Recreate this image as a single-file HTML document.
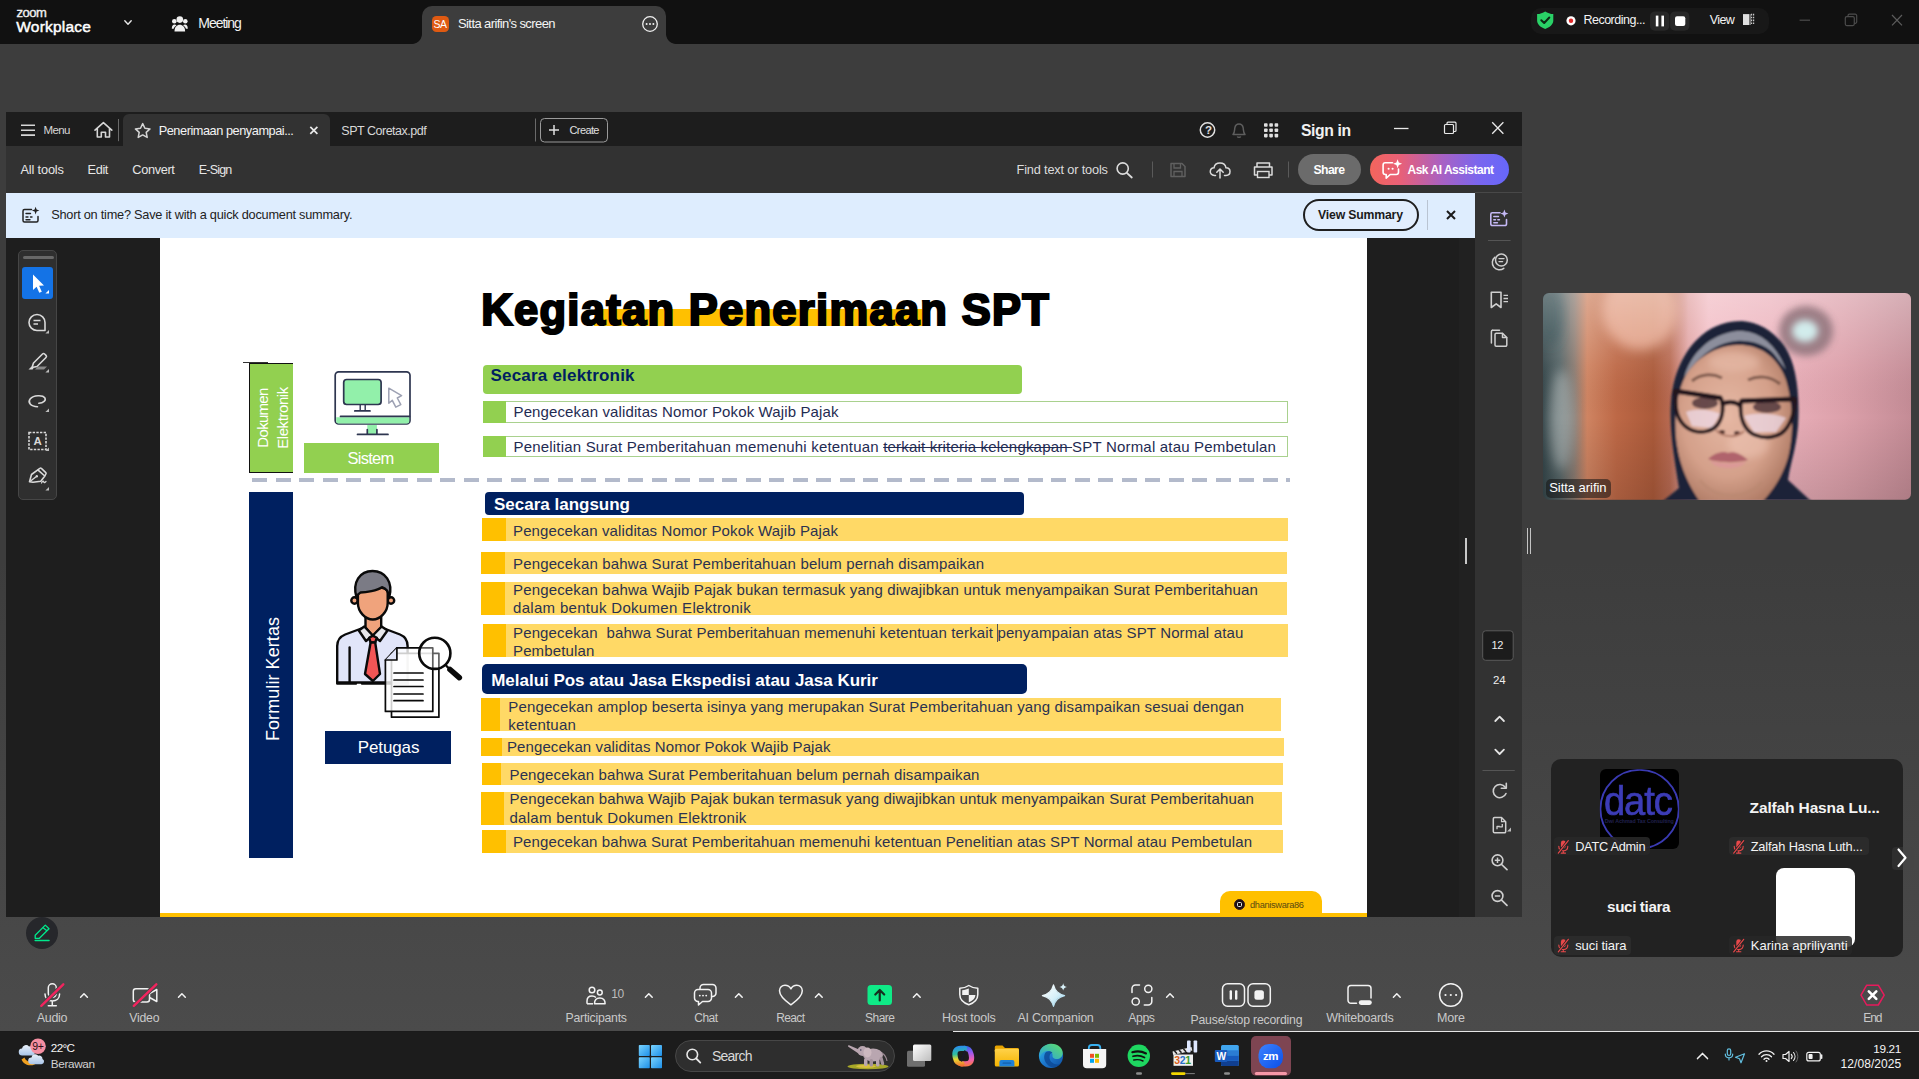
<!DOCTYPE html>
<html lang="id">
<head>
<meta charset="utf-8">
<title>Zoom Workplace</title>
<style>
*{box-sizing:border-box;margin:0;padding:0}
html,body{width:1919px;height:1079px;overflow:hidden}
body{position:relative;font-family:"Liberation Sans",sans-serif;color:#fff;background:linear-gradient(180deg,#3d3d3d 0,#3d3d3d 560px,#4b4b4b 1031px);}
.abs{position:absolute}
.t{position:absolute;white-space:pre;line-height:1}
svg{position:absolute;overflow:visible}

</style>
</head>
<body>
<!-- BG -->
<div class="abs" style="left:0px;top:0px;width:1919px;height:44px;background:#111;"></div>
<div class="abs" style="left:422px;top:6px;width:244px;height:38px;background:#3d3d3d;border-radius:10px 10px 0 0;"></div>
<div class="abs" style="left:6px;top:112px;width:1516px;height:805px;background:#1e1e1e;"></div>
<div class="abs" style="left:6px;top:112px;width:1516px;height:34px;background:#1d1d1d;"></div>
<div class="abs" style="left:123px;top:114px;width:207px;height:32px;background:#323232;border-radius:6px 6px 0 0;"></div>
<div class="abs" style="left:6px;top:146px;width:1516px;height:47px;background:#323232;"></div>
<div class="abs" style="left:6px;top:193px;width:1469px;height:45px;background:#deedfe;"></div>
<div class="abs" style="left:1475px;top:193px;width:47px;height:724px;background:#323232;"></div>
<div class="abs" style="left:0px;top:1032px;width:1919px;height:47px;background:#1c1c1c;"></div>
<!-- SLIDE -->
<div class="abs" style="left:160px;top:238px;width:1207px;height:679px;background:#fff;"></div>
<div class="abs" style="left:594px;top:309px;width:329px;height:17px;background:#ffc000;"></div>
<span class="t" style="left:481.20px;top:289.00px;font-size:43.5px;letter-spacing:1.297px;font-weight:700;color:#000;-webkit-text-stroke:2.200px #000;">Kegiatan Penerimaan SPT</span>
<div class="abs" style="left:243px;top:362px;width:25px;height:1px;background:#333;"></div>
<div class="abs" style="left:249px;top:363px;width:44px;height:109.5px;background:#92d050;border:1px solid #111;border-right:0;"></div>
<span class="t" style="left:262.30px;top:417.50px;font-size:15px;letter-spacing:-0.700px;transform:translate(-50%,-50%) rotate(-90deg);transform-origin:50% 50%;">Dokumen</span>
<span class="t" style="left:281.80px;top:417.70px;font-size:15px;letter-spacing:-0.429px;transform:translate(-50%,-50%) rotate(-90deg);transform-origin:50% 50%;">Elektronik</span>
<div class="abs" style="left:304px;top:442.5px;width:135px;height:30.5px;background:#92d050;"></div>
<span class="t" style="left:347.50px;top:450.00px;font-size:16.5px;letter-spacing:-0.721px;">Sistem</span>
<div class="abs" style="left:252px;top:477.5px;width:1038px;height:4px;background:repeating-linear-gradient(90deg,#b3bacb 0,#b3bacb 15px,transparent 15px,transparent 23.5px)"></div>
<div class="abs" style="left:249px;top:491.5px;width:43.7px;height:366.9px;background:#002060;"></div>
<span class="t" style="left:272.60px;top:678.70px;font-size:18px;letter-spacing:0.070px;transform:translate(-50%,-50%) rotate(-90deg);transform-origin:50% 50%;">Formulir Kertas</span>
<div class="abs" style="left:324.8px;top:731px;width:126.4px;height:33px;background:#002060;"></div>
<span class="t" style="left:357.70px;top:739.00px;font-size:17px;letter-spacing:-0.098px;">Petugas</span>
<div class="abs" style="left:482.5px;top:364.7px;width:539.3px;height:29.5px;background:#92d050;border-radius:4px;"></div>
<span class="t" style="left:490.50px;top:367.00px;font-size:17px;letter-spacing:0.203px;font-weight:700;color:#002060;">Secara elektronik</span>
<div class="abs" style="left:484.5px;top:491.7px;width:539px;height:23.3px;background:#002060;border-radius:4px;"></div>
<span class="t" style="left:494.00px;top:496.00px;font-size:17px;letter-spacing:-0.003px;font-weight:700;">Secara langsung</span>
<div class="abs" style="left:481.7px;top:664.2px;width:545.1px;height:29.6px;background:#002060;border-radius:5px;"></div>
<span class="t" style="left:491.20px;top:672.00px;font-size:17px;letter-spacing:-0.014px;font-weight:700;">Melalui Pos atau Jasa Ekspedisi atau Jasa Kurir</span>
<div class="abs" style="left:482.5px;top:401.2px;width:805px;height:21.6px;background:#fff;border:1px solid #a9d18e;"></div>
<div class="abs" style="left:482.5px;top:401.2px;width:23.5px;height:22.1px;background:#92d050;"></div>
<div class="abs" style="left:482.5px;top:435.7px;width:805px;height:21.3px;background:#fff;border:1px solid #a9d18e;"></div>
<div class="abs" style="left:482.5px;top:435.7px;width:23.5px;height:21.8px;background:#92d050;"></div>
<span class="t" style="left:513.50px;top:404.00px;font-size:15px;letter-spacing:0.124px;color:#1f2b52;">Pengecekan validitas Nomor Pokok Wajib Pajak</span>
<span class="t" style="left:513.50px;top:439.00px;font-size:15px;letter-spacing:0.189px;color:#1f2b52;">Penelitian Surat Pemberitahuan memenuhi ketentuan <span style="text-decoration:line-through">terkait kriteria kelengkapan </span>SPT Normal atau Pembetulan</span>
<div class="abs" style="left:481.5px;top:518.3px;width:806px;height:22.9px;background:#ffd966;"></div>
<div class="abs" style="left:481.5px;top:518.3px;width:24px;height:22.9px;background:#ffc000;"></div>
<div class="abs" style="left:481.3px;top:552.4px;width:806.2px;height:22.1px;background:#ffd966;"></div>
<div class="abs" style="left:481.3px;top:552.4px;width:24.2px;height:22.1px;background:#ffc000;"></div>
<div class="abs" style="left:481.3px;top:581.8px;width:806.2px;height:33px;background:#ffd966;"></div>
<div class="abs" style="left:481.3px;top:581.8px;width:24.2px;height:33px;background:#ffc000;"></div>
<div class="abs" style="left:483px;top:624.3px;width:804.5px;height:33.2px;background:#ffd966;"></div>
<div class="abs" style="left:483px;top:624.3px;width:23px;height:33.2px;background:#ffc000;"></div>
<div class="abs" style="left:481.3px;top:698.3px;width:800px;height:33px;background:#ffd966;"></div>
<div class="abs" style="left:481.3px;top:698.3px;width:18.7px;height:33px;background:#ffc000;"></div>
<div class="abs" style="left:481.3px;top:738px;width:802.5px;height:17.5px;background:#ffd966;"></div>
<div class="abs" style="left:481.3px;top:738px;width:21.2px;height:17.5px;background:#ffc000;"></div>
<div class="abs" style="left:482px;top:763px;width:800.5px;height:21.5px;background:#ffd966;"></div>
<div class="abs" style="left:482px;top:763px;width:18.8px;height:21.5px;background:#ffc000;"></div>
<div class="abs" style="left:481.3px;top:792px;width:801.2px;height:33px;background:#ffd966;"></div>
<div class="abs" style="left:481.3px;top:792px;width:22.5px;height:33px;background:#ffc000;"></div>
<div class="abs" style="left:482px;top:829.5px;width:801.3px;height:23.8px;background:#ffd966;"></div>
<div class="abs" style="left:482px;top:829.5px;width:24px;height:23.8px;background:#ffc000;"></div>
<span class="t" style="left:513.00px;top:523.00px;font-size:15px;letter-spacing:0.124px;color:#2b3250;">Pengecekan validitas Nomor Pokok Wajib Pajak</span>
<span class="t" style="left:513.00px;top:556.00px;font-size:15px;letter-spacing:0.150px;color:#2b3250;">Pengecekan bahwa Surat Pemberitahuan belum pernah disampaikan</span>
<span class="t" style="left:513.00px;top:582.00px;font-size:15px;letter-spacing:0.164px;color:#2b3250;">Pengecekan bahwa Wajib Pajak bukan termasuk yang diwajibkan untuk menyampaikan Surat Pemberitahuan</span>
<span class="t" style="left:513.00px;top:600.00px;font-size:15px;letter-spacing:0.310px;color:#2b3250;">dalam bentuk Dokumen Elektronik</span>
<span class="t" style="left:513.00px;top:625.00px;font-size:15px;letter-spacing:0.140px;color:#2b3250;">Pengecekan  bahwa Surat Pemberitahuan memenuhi ketentuan terkait penyampaian atas SPT Normal atau</span>
<span class="t" style="left:513.00px;top:643.00px;font-size:15px;letter-spacing:0.137px;color:#2b3250;">Pembetulan</span>
<span class="t" style="left:508.30px;top:699.00px;font-size:15px;letter-spacing:0.138px;color:#2b3250;">Pengecekan amplop beserta isinya yang merupakan Surat Pemberitahuan yang disampaikan sesuai dengan</span>
<span class="t" style="left:508.30px;top:717.00px;font-size:15px;letter-spacing:0.202px;color:#2b3250;">ketentuan</span>
<span class="t" style="left:507.00px;top:739.00px;font-size:15px;letter-spacing:0.090px;color:#2b3250;">Pengecekan validitas Nomor Pokok Wajib Pajak</span>
<span class="t" style="left:509.50px;top:767.00px;font-size:15px;letter-spacing:0.133px;color:#2b3250;">Pengecekan bahwa Surat Pemberitahuan belum pernah disampaikan</span>
<span class="t" style="left:509.50px;top:791.00px;font-size:15px;letter-spacing:0.157px;color:#2b3250;">Pengecekan bahwa Wajib Pajak bukan termasuk yang diwajibkan untuk menyampaikan Surat Pemberitahuan</span>
<span class="t" style="left:509.50px;top:810.00px;font-size:15px;letter-spacing:0.277px;color:#2b3250;">dalam bentuk Dokumen Elektronik</span>
<span class="t" style="left:513.00px;top:834.00px;font-size:15px;letter-spacing:0.117px;color:#2b3250;">Pengecekan bahwa Surat Pemberitahuan memenuhi ketentuan Penelitian atas SPT Normal atau Pembetulan</span>
<div class="abs" style="left:996.5px;top:624px;width:1px;height:18px;background:#555;"></div>
<div class="abs" style="left:160px;top:913px;width:1207px;height:4px;background:#ffc000;"></div>
<div class="abs" style="left:1220px;top:890.6px;width:102px;height:26.4px;background:#ffc000;border-radius:10px 10px 0 0;"></div>
<div class="abs" style="left:1234px;top:899px;width:11px;height:11px;border-radius:50%;background:#1a1014;border:1px solid #3a1a20"></div><div class="abs" style="left:1237px;top:902px;width:5px;height:5px;border:1px solid #eee;border-radius:1.5px"></div>
<span class="t" style="left:1250.00px;top:901.00px;font-size:9.25px;letter-spacing:-0.328px;color:#5a4a10;">dhaniswara86</span>
<!-- D -->
#2e3650
<!-- ICONS -->
<svg style="left:0;top:0" width="1919" height="1079" viewBox="0 0 1919 1079">
<g fill="none" stroke="#2e3650" stroke-width="1.7" stroke-linejoin="round" stroke-linecap="round">
<rect x="367.3" y="425" width="9.6" height="9" fill="#92f0aa" stroke="none"/>
<path d="M367.3 429.5V434M376.9 429.5V434"/>
<path d="M357.5 434.4H388"/>
<rect x="335.2" y="371.8" width="74.8" height="52.2" rx="3.5" fill="#fff"/>
<path d="M336.2 417.2H409.2V421.5a2 2 0 0 1-2 2H338.2a2 2 0 0 1-2-2Z" fill="#92f0aa" stroke="none"/>
<path d="M340.5 416.4H409.5"/>
<rect x="343.7" y="379.5" width="37.4" height="25" rx="3" fill="#92f0aa"/>
<path d="M360.2 405V410M365.2 405V410" stroke-width="1.4"/>
<path d="M354.8 410.9H370" />
<path d="M388.8 388.2V403.3L392.3 400.3L395.8 407.2L400.8 404.6L397.3 398L401.6 395.6Z" stroke="#9da1b3" stroke-width="1.5" fill="#fff"/>
</g></svg>
<svg style="left:0;top:0" width="1919" height="1079" viewBox="0 0 1919 1079">
<g stroke="#0a0a0a" stroke-width="2.4" stroke-linejoin="round" stroke-linecap="round" fill="none">
<!-- body -->
<path d="M337.2 682.5V646c0-6 3-9.5 8-11.5L364 627.5H381.5L400 634.5c5 2 7.6 5.5 7.6 11.5V682.5H337.2Z" fill="#e1e5f9"/>
<path d="M349.6 647.5V682.5"/>
<path d="M337.2 683.5H356M362 683.5H408" />
<!-- neck -->
<path d="M365.5 617V627.5L372.8 636L381.2 627.5V617Z" fill="#f0a37c"/>
<!-- collar -->
<path d="M364.3 626.5L358.8 630.5L366 641L372.8 635.5Z" fill="#e6e6ea"/>
<path d="M381.6 626.5L387.5 630.5L380 641L372.8 635.5Z" fill="#e6e6ea"/>
<!-- tie -->
<path d="M369.2 637.8L372.8 635.8L376.8 637.8L375.2 642.5H370.6Z" fill="#f25555"/>
<path d="M370.6 642.5H375.2L380 674L372.9 681L365 674Z" fill="#f25555"/>
<!-- ears -->
<circle cx="354.5" cy="600.5" r="3.2" fill="#f0a37c"/><circle cx="391" cy="600.5" r="3.2" fill="#f0a37c"/>
<!-- face -->
<path d="M357.9 592C357.9 585 387.7 585 387.7 592V603C387.700 612 380 619.500 372.800 619.500C365.500 619.500 357.900 612 357.900 603Z" fill="#f0a37c"/>
<!-- hair -->
<path d="M356.500 597.500C352 582 360 571 372.500 571C385 571 393.500 582 389.200 597.500C388.500 591 385 588 382 587.200C377 590.500 366 592.500 360.500 592.500C358.500 593.500 357.200 595 356.500 597.500Z" fill="#7b7b85"/>
<!-- docs -->
<g stroke-width="1.7">
<rect x="391.500" y="653.300" width="47.400" height="63.900" fill="#fff" fill-opacity="0.800"/>
<path d="M396.900 647.900H432.800V711.400H385.400V660Z" fill="#fff" fill-opacity="0.800"/>
<path d="M385.400 660H396.900V647.900" fill="#e1e5f9"/>
<path d="M394 673H423M394 680H423M394 686.500H423M394 694H423M394 700.700H423"/>
</g>
<!-- magnifier -->
<circle cx="434.800" cy="653.300" r="15.600" stroke-width="2.600" fill="rgba(255,255,255,0.35)"/>
<path d="M446.500 666L449.500 669"/>
<path d="M450 669.500L459.300 677.600" stroke-width="5.600"/>
</g></svg>
<!-- K -->
#0a0a0a
<!-- LG -->
#92f0aa
<!-- ACRO -->
<svg style="left:0;top:0" width="1919" height="1079" viewBox="0 0 1919 1079" ><path d="M21 125.300H35M21 130.250H35M21 135.100H35" stroke="#d6d6d6" stroke-width="1.600" fill="none"/><path d="M95 130.200L103.400 122.700L111.800 130.200M97.300 128.500V137H101.300V132.200H105.500V137H109.500V128.500" stroke="#d6d6d6" stroke-width="1.600" fill="none" stroke-linejoin="round" stroke-linecap="round"/><path d="M118.500 119V141.200" stroke="#6a6a6a" stroke-width="1"/><path d="M142.700 123.600L144.900 128.300L150 128.900L146.200 132.400L147.200 137.400L142.700 134.900L138.200 137.400L139.200 132.400L135.400 128.900L140.500 128.300Z" stroke="#d6d6d6" stroke-width="1.500" fill="none" stroke-linejoin="round"/><path d="M310.300 126.800L317.400 133.900M317.400 126.800L310.300 133.900" stroke="#e8e8e8" stroke-width="1.700" fill="none"/><path d="M535.500 118.500V141.500" stroke="#6a6a6a" stroke-width="1"/><rect x="540.500" y="118.500" width="67" height="23.500" rx="4" fill="none" stroke="#9a9a9a" stroke-width="1"/><path d="M549 130H559M554 125V135" stroke="#e0e0e0" stroke-width="1.500"/><circle cx="1207.500" cy="130" r="7.200" fill="none" stroke="#e0e0e0" stroke-width="1.500"/><path d="M1233 134.500C1234.800 132.500 1234.500 130 1234.800 128C1235.200 125.500 1237 124 1239 124C1241 124 1242.800 125.500 1243.200 128C1243.500 130 1243.200 132.500 1245 134.500Z" fill="none" stroke="#5e5e5e" stroke-width="1.500" stroke-linejoin="round"/><path d="M1237.300 136.500C1237.800 137.700 1240.200 137.700 1240.700 136.500" stroke="#5e5e5e" stroke-width="1.400" fill="none"/><rect x="1264" y="123.2" width="3.600" height="3.600" rx="0.800" fill="#e0e0e0"/><rect x="1264" y="128.5" width="3.600" height="3.600" rx="0.800" fill="#e0e0e0"/><rect x="1264" y="133.8" width="3.600" height="3.600" rx="0.800" fill="#e0e0e0"/><rect x="1269.3" y="123.2" width="3.600" height="3.600" rx="0.800" fill="#e0e0e0"/><rect x="1269.3" y="128.5" width="3.600" height="3.600" rx="0.800" fill="#e0e0e0"/><rect x="1269.3" y="133.8" width="3.600" height="3.600" rx="0.800" fill="#e0e0e0"/><rect x="1274.6" y="123.2" width="3.600" height="3.600" rx="0.800" fill="#e0e0e0"/><rect x="1274.6" y="128.5" width="3.600" height="3.600" rx="0.800" fill="#e0e0e0"/><rect x="1274.6" y="133.8" width="3.600" height="3.600" rx="0.800" fill="#e0e0e0"/><path d="M1394 128.500H1408.500" stroke="#e8e8e8" stroke-width="1.300"/><rect x="1444.500" y="124.500" width="9" height="9" rx="1" fill="none" stroke="#e8e8e8" stroke-width="1.200"/><path d="M1447 124.500V123.200a1 1 0 0 1 1-1H1455a1 1 0 0 1 1 1V130.500a1 1 0 0 1-1 1H1453.500" fill="none" stroke="#e8e8e8" stroke-width="1.200"/><path d="M1492.200 122.300L1503.400 133.700M1503.400 122.300L1492.200 133.700" stroke="#e8e8e8" stroke-width="1.300"/></svg>
<span class="t" style="left:1205.00px;top:125.00px;font-size:11.5px;font-weight:700;color:#e0e0e0;">?</span>
<span class="t" style="left:43.60px;top:125.00px;font-size:11.5px;letter-spacing:-0.693px;color:#d6d6d6;">Menu</span>
<span class="t" style="left:158.70px;top:125.00px;font-size:12.75px;letter-spacing:-0.458px;color:#f4f4f4;">Penerimaan penyampai...</span>
<span class="t" style="left:341.30px;top:125.00px;font-size:12.5px;letter-spacing:-0.480px;color:#d8d8d8;">SPT Coretax.pdf</span>
<span class="t" style="left:569.50px;top:125.00px;font-size:11px;letter-spacing:-0.606px;color:#e0e0e0;">Create</span>
<span class="t" style="left:1301.00px;top:123.00px;font-size:15.75px;letter-spacing:-0.414px;font-weight:700;color:#f0f0f0;">Sign in</span>
<span class="t" style="left:20.50px;top:164.00px;font-size:12.75px;letter-spacing:-0.157px;color:#e6e6e6;">All tools</span>
<span class="t" style="left:87.50px;top:164.00px;font-size:12.75px;letter-spacing:-0.354px;color:#e6e6e6;">Edit</span>
<span class="t" style="left:132.30px;top:164.00px;font-size:12.75px;letter-spacing:-0.343px;color:#e6e6e6;">Convert</span>
<span class="t" style="left:198.80px;top:164.00px;font-size:12.5px;letter-spacing:-0.806px;color:#e6e6e6;">E-Sign</span>
<span class="t" style="left:1016.50px;top:164.00px;font-size:12.75px;letter-spacing:-0.162px;color:#dcdcdc;">Find text or tools</span>
<svg style="left:0;top:0" width="1919" height="1079" viewBox="0 0 1919 1079" ><circle cx="1122.700" cy="168.500" r="5.600" fill="none" stroke="#dcdcdc" stroke-width="1.600"/><path d="M1126.800 172.800L1131.800 177.500" stroke="#dcdcdc" stroke-width="1.800" stroke-linecap="round"/><path d="M1152.500 161.500V177.500M1288.500 161.500V177.500" stroke="#5a5a5a" stroke-width="1"/><path d="M1171 163.500H1182L1185 166.500V176.500H1171Z" fill="none" stroke="#606060" stroke-width="1.500" stroke-linejoin="round"/><path d="M1174 163.800V168H1180.500V163.800M1174 176.500V171.500H1182V176.500" fill="none" stroke="#606060" stroke-width="1.300"/><path d="M1215.500 175.500H1214.500C1211.500 175.500 1210 173.200 1210.300 171.200C1210.600 169 1212.300 167.800 1214 167.800C1214.500 164.800 1217 163 1220 163C1223.300 163 1225.500 165.200 1226 167.800C1228.300 167.800 1230 169.300 1230 171.600C1230 173.800 1228.300 175.500 1226 175.500H1224.500" fill="none" stroke="#dcdcdc" stroke-width="1.500" stroke-linecap="round"/><path d="M1220 178V169.500M1216.800 172.300L1220 169L1223.200 172.300" fill="none" stroke="#dcdcdc" stroke-width="1.500" stroke-linecap="round" stroke-linejoin="round"/><path d="M1257 167V163H1269.500V167M1257.500 175H1254.500V167H1272V175H1269" fill="none" stroke="#dcdcdc" stroke-width="1.500" stroke-linejoin="round"/><rect x="1257.500" y="171.500" width="11.500" height="6" fill="none" stroke="#dcdcdc" stroke-width="1.400"/></svg>
<div class="abs" style="left:1298px;top:154px;width:63px;height:31px;background:#6b6b6b;border-radius:15.500px;"></div>
<span class="t" style="left:1313.50px;top:164.00px;font-size:12.25px;letter-spacing:-0.639px;font-weight:700;">Share</span>
<div class="abs" style="left:1370px;top:154px;width:139px;height:31px;background:linear-gradient(90deg,#f4655c 0%,#e86078 22%,#a861c4 52%,#7a66ee 78%,#6667fb 100%);border-radius:15.500px;"></div>
<span class="t" style="left:1407.50px;top:164.00px;font-size:12px;letter-spacing:-0.487px;font-weight:700;">Ask AI Assistant</span>
<svg style="left:0;top:0" width="1919" height="1079" viewBox="0 0 1919 1079" ><path d="M1392.500 162.800H1385.300a2.200 2.200 0 0 0-2.200 2.200V172.300a2.200 2.200 0 0 0 2.200 2.200H1386.200V178.200L1390.200 174.500H1396.300a2.200 2.200 0 0 0 2.200-2.200V169" fill="none" stroke="#fff" stroke-width="1.600" stroke-linejoin="round" stroke-linecap="round"/><path d="M1397.600 159.300L1398.800 162.600L1402.100 163.800L1398.800 165L1397.600 168.300L1396.400 165L1393.100 163.800L1396.400 162.600Z" fill="#fff"/><circle cx="1388.600" cy="168.700" r="1.050" fill="#fff"/><circle cx="1392.600" cy="168.700" r="1.050" fill="#fff"/></svg>
<svg style="left:0;top:0" width="1919" height="1079" viewBox="0 0 1919 1079" ><g fill="none" stroke="#222" stroke-width="1.500" stroke-linejoin="round" stroke-linecap="round"><path d="M31.500 209.500H24.500a1.500 1.500 0 0 0-1.500 1.500V220.500a1.500 1.500 0 0 0 1.500 1.500H36.500a1.500 1.500 0 0 0 1.500-1.500V216.500"/><path d="M26 213.500H30.500M26 217H28M30.500 217H32M26 219.800H30" stroke-width="1.400"/></g><path d="M35.600 206.800L36.600 209.600L39.400 210.600L36.600 211.600L35.600 214.400L34.600 211.600L31.800 210.600L34.600 209.600Z" fill="#222"/></svg>
<span class="t" style="left:51.20px;top:209.00px;font-size:12.75px;letter-spacing:-0.239px;color:#222;">Short on time? Save it with a quick document summary.</span>
<div class="abs" style="left:1302.5px;top:199px;width:116px;height:31.5px;background:#e2eefd;border:2px solid #1f1f1f;border-radius:16px;"></div>
<span class="t" style="left:1318.00px;top:209.00px;font-size:12.25px;letter-spacing:-0.177px;font-weight:700;color:#1a1a1a;">View Summary</span>
<div class="abs" style="left:1427px;top:200px;width:1px;height:30px;background:#b9c4d2;"></div>
<svg style="left:0;top:0" width="1919" height="1079" viewBox="0 0 1919 1079" ><path d="M1447 211L1455 219M1455 211L1447 219" stroke="#1a1a1a" stroke-width="2"/></svg>
<!-- ACROB -->
<div class="abs" style="left:18px;top:250px;width:39px;height:250px;background:#2f2f2f;border:1px solid #464646;border-radius:5px;"></div>
<div class="abs" style="left:23px;top:255.5px;width:31px;height:3px;background:#686868;border-radius:1.500px;"></div>
<div class="abs" style="left:22px;top:267.3px;width:31.4px;height:31.9px;background:#1473e6;border-radius:3px;"></div>
<svg style="left:0;top:0" width="1919" height="1079" viewBox="0 0 1919 1079" ><path d="M33 274.500V290L36.600 286.800L39.300 292.800L41.800 291.700L39.100 285.800L44 285.500Z" fill="#fff"/><path d="M49 289.9V293.5H45.4Z" fill="#fff"/><path d="M49 329.9V333.5H45.4Z" fill="#bdbdbd"/><path d="M49 368.9V372.5H45.4Z" fill="#bdbdbd"/><path d="M49 408.4V412H45.4Z" fill="#bdbdbd"/><path d="M49 447.4V451H45.4Z" fill="#bdbdbd"/><path d="M49 486.9V490.5H45.4Z" fill="#bdbdbd"/><path d="M37 314.500a8 8 0 1 0 0 16H45V322.500a8 8 0 0 0-8-8Z" fill="none" stroke="#d9d9d9" stroke-width="1.600" stroke-linejoin="round"/><path d="M33.500 320.500H40.500M33.500 324H38" stroke="#d9d9d9" stroke-width="1.500"/><path d="M33.500 363L42.500 354a1.500 1.500 0 0 1 2.100 0L46 355.400a1.500 1.500 0 0 1 0 2.100L37 366.500L32 367.500Z" fill="none" stroke="#d9d9d9" stroke-width="1.600" stroke-linejoin="round"/><path d="M28.500 369.500L31.500 366.500L33.500 368.500L32.500 369.500Z" fill="#d9d9d9"/><path d="M35 369.500L38 366.500H47L44 369.500Z" fill="#8a8a8a"/><path d="M38.800 403.300C43.500 403.200 46.300 400.300 44.800 397.800C42.800 394.700 33.500 395 30.300 398.800C27.300 402.500 30.500 406.600 37.500 406.700" fill="none" stroke="#d9d9d9" stroke-width="1.600" stroke-linecap="round"/><rect x="29" y="432.500" width="17" height="17" fill="none" stroke="#d9d9d9" stroke-width="1.600" stroke-dasharray="2.400 1.250"/><path d="M29.500 481.800L31.500 474.500L37.800 469.800L44.800 476L40.800 481.200L33 482.300Z" fill="none" stroke="#d9d9d9" stroke-width="1.600" stroke-linejoin="round"/><path d="M37.800 469.800L39.800 468.300a1.200 1.200 0 0 1 1.600 0.100L45.800 472.600a1.200 1.200 0 0 1 0 1.600L44.800 476" fill="none" stroke="#d9d9d9" stroke-width="1.500" stroke-linejoin="round"/><path d="M30 481.500L36 476.800" stroke="#d9d9d9" stroke-width="1.400"/><circle cx="36.800" cy="476.300" r="1.200" fill="#d9d9d9"/><path d="M41.500 483C42.500 481 43.500 480.500 43.800 482C44.100 483.200 45 482.500 46 481.500" fill="none" stroke="#d9d9d9" stroke-width="1.200" stroke-linecap="round"/></svg>
<span class="t" style="left:33.50px;top:436.00px;font-size:11.5px;font-weight:700;color:#d9d9d9;">A</span>
<div class="abs" style="left:1458.5px;top:238px;width:16.5px;height:679px;background:#212121;"></div>
<div class="abs" style="left:1475px;top:192px;width:47px;height:1px;background:#484848;"></div>
<div class="abs" style="left:1465px;top:538px;width:2px;height:26px;background:#c8c8c8;"></div>
<svg style="left:0;top:0" width="1919" height="1079" viewBox="0 0 1919 1079" ><g fill="none" stroke="#c5b9f6" stroke-width="1.600" stroke-linejoin="round" stroke-linecap="round"><path d="M1500 212.800H1492.300a1.500 1.500 0 0 0-1.500 1.500V224a1.500 1.500 0 0 0 1.500 1.500H1505a1.500 1.500 0 0 0 1.500-1.500V219.500"/><path d="M1493.800 216.500H1498.500M1493.800 219.800H1495.500M1497.800 219.800H1499.500M1493.800 222.800H1497.500" stroke-width="1.400"/></g><path d="M1504.400 209.600L1505.500 212.500L1508.400 213.600L1505.500 214.700L1504.400 217.600L1503.300 214.700L1500.400 213.600L1503.300 212.500Z" fill="#c5b9f6"/><path d="M1488 240.500H1510.600" stroke="#555" stroke-width="1"/><g fill="none" stroke="#cfcfcf" stroke-width="1.500" stroke-linecap="round" stroke-linejoin="round"><circle cx="1501.400" cy="260" r="5.900"/><path d="M1495 257.200A6.200 6.200 0 0 0 1503.800 268.300"/><path d="M1499 258.600H1504M1499 261.600H1502.600" stroke-width="1.400"/></g><g fill="none" stroke="#cfcfcf" stroke-width="1.600" stroke-linejoin="round"><path d="M1491.300 292.300H1501V307.500L1496.200 303.800L1491.300 307.500Z"/><path d="M1503.500 295.400H1508M1503.500 298.500H1508M1503.500 301.600H1508" stroke-width="1.300"/></g><g fill="none" stroke="#cfcfcf" stroke-width="1.500" stroke-linejoin="round" stroke-linecap="round"><path d="M1495 343V331.500a1.200 1.200 0 0 1 1.200-1.200" transform="translate(-3.600 0)"/><path d="M1492.600 330.300H1499.500"/><path d="M1496.200 333.300H1502.500L1506.800 337.600V345a1.200 1.200 0 0 1-1.200 1.200H1496.200a1.200 1.200 0 0 1-1.200-1.200V334.500a1.200 1.200 0 0 1 1.200-1.200Z"/><path d="M1502.500 333.500V337.600H1506.600"/></g><rect x="1482.700" y="630.800" width="30.500" height="29.500" rx="3" fill="#1c1c1c" stroke="#5a5a5a" stroke-width="1"/><path d="M1495.300 721L1499.600 716.700L1503.900 721M1495.300 749.700L1499.600 754L1503.900 749.700" fill="none" stroke="#e4e4e4" stroke-width="1.800" stroke-linecap="round" stroke-linejoin="round"/><path d="M1482.500 770.500H1514.800" stroke="#555" stroke-width="1"/><path d="M1505.300 787.300A6.600 6.600 0 1 0 1506 793.500" fill="none" stroke="#cfcfcf" stroke-width="1.600" stroke-linecap="round"/><path d="M1506.300 783.300V788.300H1501.300" fill="none" stroke="#cfcfcf" stroke-width="1.600" stroke-linecap="round" stroke-linejoin="round"/><g fill="none" stroke="#cfcfcf" stroke-width="1.500" stroke-linejoin="round"><path d="M1494.500 817.500H1501.500L1505.700 821.700V831.500a1.200 1.200 0 0 1-1.200 1.200H1494.500a1.200 1.200 0 0 1-1.200-1.200V818.700a1.200 1.200 0 0 1 1.200-1.200Z"/><path d="M1501.500 817.700V821.700H1505.500" stroke-width="1.200"/><path d="M1497 829.300V826.500H1499.800M1502.300 824V826.800H1499.500" stroke-width="1.300"/></g><path d="M1511 827.500V831.500H1507Z" fill="#bdbdbd"/><circle cx="1497.500" cy="860.3" r="5.400" fill="none" stroke="#cfcfcf" stroke-width="1.600"/><path d="M1501.600 864.5L1507 869.6999999999999" stroke="#cfcfcf" stroke-width="1.700" stroke-linecap="round"/><path d="M1494.800 860.3H1500.200" stroke="#cfcfcf" stroke-width="1.500"/><path d="M1497.500 857.5999999999999V863.0" stroke="#cfcfcf" stroke-width="1.500"/><circle cx="1497.500" cy="896" r="5.400" fill="none" stroke="#cfcfcf" stroke-width="1.600"/><path d="M1501.600 900.2L1507 905.4" stroke="#cfcfcf" stroke-width="1.700" stroke-linecap="round"/><path d="M1494.800 896H1500.200" stroke="#cfcfcf" stroke-width="1.500"/></svg>
<span class="t" style="left:1491.58px;top:640.00px;font-size:11px;color:#eee;letter-spacing:-0.500px;">12</span>
<span class="t" style="left:1493.00px;top:675.00px;font-size:11.5px;color:#eee;letter-spacing:-0.200px;">24</span>
<!-- L -->
#d6d6d6
<!-- P -->
#c5b9f6
<!-- S -->
#cfcfcf
<!-- W -->
#d9d9d9
<!-- ZOOMTOP -->
<div class="abs" style="left:412px;top:34px;width:10px;height:10px;background:radial-gradient(circle at 0 0,#111 9.500px,#3d3d3d 10.300px)"></div>
<div class="abs" style="left:666px;top:34px;width:10px;height:10px;background:radial-gradient(circle at 100% 0,#111 9.500px,#3d3d3d 10.300px)"></div>
<span class="t" style="left:16.50px;top:6.00px;font-size:13px;letter-spacing:-0.495px;color:#f2f2f2;-webkit-text-stroke:0.350px #f2f2f2;">zoom</span>
<span class="t" style="left:16.30px;top:19.00px;font-size:15.5px;letter-spacing:0.197px;-webkit-text-stroke:0.450px #fff;">Workplace</span>
<svg style="left:0;top:0" width="1919" height="1079" viewBox="0 0 1919 1079" ><path d="M124.800 20.800L128 24.200L131.200 20.800" fill="none" stroke="#e8e8e8" stroke-width="1.400" stroke-linecap="round" stroke-linejoin="round"/><g fill="#f0f0f0"><circle cx="179.800" cy="19.600" r="3.300"/><circle cx="174.300" cy="21.300" r="2.300"/><circle cx="185.300" cy="21.300" r="2.300"/><path d="M174.500 31.500C174.500 27 177 24.800 179.800 24.800C182.600 24.800 185.100 27 185.100 31.500Z"/><path d="M171.800 28.800C171.800 26 173 24.600 174.600 24.600C175.300 24.600 176 24.900 176.500 25.300C174.800 26.500 173.900 27.800 173.700 28.800Z"/><path d="M187.800 28.800C187.800 26 186.600 24.600 185 24.600C184.300 24.600 183.600 24.900 183.100 25.300C184.800 26.500 185.700 27.800 185.900 28.800Z"/></g><circle cx="650" cy="24" r="7.300" fill="none" stroke="#f0f0f0" stroke-width="1.300"/><circle cx="646.600" cy="24" r="1" fill="#f0f0f0"/><circle cx="650" cy="24" r="1" fill="#f0f0f0"/><circle cx="653.400" cy="24" r="1" fill="#f0f0f0"/></svg>
<span class="t" style="left:198.30px;top:16.00px;font-size:14px;letter-spacing:-1.051px;color:#f2f2f2;">Meeting</span>
<div class="abs" style="left:432px;top:16.3px;width:16.8px;height:16.2px;background:#df5a12;border-radius:4.500px;"></div>
<span class="t" style="left:433.60px;top:19.00px;font-size:10.5px;letter-spacing:-0.500px;">SA</span>
<span class="t" style="left:458.00px;top:17.00px;font-size:13px;letter-spacing:-0.596px;color:#f4f4f4;">Sitta arifin's screen</span>
<div class="abs" style="left:1531.4px;top:7.9px;width:238.1px;height:25.8px;background:#181818;border-radius:10px;"></div>
<svg style="left:0;top:0" width="1919" height="1079" viewBox="0 0 1919 1079" ><path d="M1545.200 11.400C1547.500 13 1550.500 13.900 1553.300 14V20.500C1553.300 24.500 1549.500 27.500 1545.200 28.900C1540.900 27.500 1537.100 24.500 1537.100 20.500V14C1539.900 13.900 1542.900 13 1545.200 11.400Z" fill="#2ad167"/><path d="M1541.300 20.200L1544.200 23L1549.300 17.500" fill="none" stroke="#0c2a15" stroke-width="2" stroke-linecap="round" stroke-linejoin="round"/><circle cx="1571" cy="20.800" r="4.600" fill="#fff"/><circle cx="1571" cy="20.800" r="2.200" fill="#e02828"/><rect x="1650" y="11.400" width="19.300" height="19.400" rx="5" fill="#272727"/><rect x="1670.100" y="11.400" width="19.300" height="19.400" rx="5" fill="#272727"/><rect x="1655.800" y="15.600" width="2.600" height="10.800" fill="#fff"/><rect x="1661.400" y="15.600" width="2.600" height="10.800" fill="#fff"/><rect x="1675" y="16.200" width="10.300" height="9.800" rx="2" fill="#fff"/><rect x="1743" y="14.100" width="6.300" height="10.900" fill="#e0e0e0"/><path d="M1751 14.600H1754.500M1751 17.500H1754.500M1751 20.400H1754.500M1751 23.300H1754.500" stroke="#c8c8c8" stroke-width="1.600" stroke-dasharray="1.200 0.800"/><path d="M1750.200 14.100V25" stroke="#bbb" stroke-width="0.800"/><path d="M1799.600 20.200H1810" stroke="#4c4c4c" stroke-width="1.200"/><rect x="1845.300" y="16.600" width="9" height="9" rx="1.500" fill="none" stroke="#4c4c4c" stroke-width="1.200"/><path d="M1848 16.600V15.700a1.500 1.500 0 0 1 1.500-1.500H1855.200a1.500 1.500 0 0 1 1.500 1.500V21.800a1.500 1.500 0 0 1-1.500 1.500H1854.300" fill="none" stroke="#4c4c4c" stroke-width="1.200"/><path d="M1892 15L1902 25.400M1902 15L1892 25.400" stroke="#5c5c5c" stroke-width="1.200"/></svg>
<span class="t" style="left:1583.40px;top:14.00px;font-size:12.5px;letter-spacing:-0.491px;color:#f4f4f4;">Recording...</span>
<span class="t" style="left:1709.80px;top:14.00px;font-size:12.5px;letter-spacing:-0.635px;color:#f4f4f4;">View</span>
<!-- VIDEO -->
<svg style="left:1543px;top:293px" width="368" height="207" viewBox="1543 293 368 207">
<defs>
<clipPath id="vc"><rect x="1543" y="293" width="368" height="206.800" rx="6"/></clipPath>
<linearGradient id="vbg" x1="0" x2="1" y1="0" y2="0">
<stop offset="0" stop-color="#36474b"/><stop offset="0.045" stop-color="#556466"/><stop offset="0.085" stop-color="#8a7a70"/><stop offset="0.120" stop-color="#cf8462"/>
<stop offset="0.200" stop-color="#bd6846"/><stop offset="0.300" stop-color="#ab5a3a"/><stop offset="0.345" stop-color="#b86a52"/><stop offset="0.395" stop-color="#e2a4a4"/><stop offset="0.450" stop-color="#f2bcc4"/>
<stop offset="0.620" stop-color="#ecb2bc"/><stop offset="0.820" stop-color="#dca0aa"/><stop offset="1" stop-color="#c48c96"/>
</linearGradient>
<linearGradient id="vtop" x1="0" x2="0" y1="0" y2="1"><stop offset="0" stop-color="#fff" stop-opacity="0.300"/><stop offset="0.350" stop-color="#fff" stop-opacity="0.050"/><stop offset="0.600" stop-color="#000" stop-opacity="0"/><stop offset="1" stop-color="#000" stop-opacity="0.120"/></linearGradient>
<radialGradient id="skin" cx="0.450" cy="0.450" r="0.650"><stop offset="0" stop-color="#e6b8a4"/><stop offset="0.600" stop-color="#d4a08a"/><stop offset="1" stop-color="#a8745e"/></radialGradient>
<filter id="b1" x="-20%" y="-20%" width="140%" height="140%"><feGaussianBlur stdDeviation="1"/></filter>
<filter id="b3" x="-30%" y="-30%" width="160%" height="160%"><feGaussianBlur stdDeviation="3.500"/></filter>
<filter id="b6" x="-30%" y="-30%" width="160%" height="160%"><feGaussianBlur stdDeviation="6"/></filter>
</defs>
<g clip-path="url(#vc)">
<rect x="1543" y="293" width="368" height="207" fill="url(#vbg)"/>
<ellipse cx="1640" cy="310" rx="38" ry="40" fill="#f0b49c" opacity="0.750" filter="url(#b6)"/>
<ellipse cx="1562" cy="420" rx="12" ry="50" fill="#a8b0b0" opacity="0.700" filter="url(#b6)"/>
<ellipse cx="1550" cy="315" rx="12" ry="30" fill="#2c4448" opacity="0.800" filter="url(#b6)"/>
<rect x="1543" y="293" width="368" height="207" fill="url(#vtop)"/>
<ellipse cx="1806" cy="331" rx="27" ry="25" fill="#947880" opacity="0.900" filter="url(#b3)"/>
<ellipse cx="1805" cy="331" rx="13" ry="11" fill="#d2ecec" filter="url(#b3)"/>
<g filter="url(#b1)">
<path d="M1662 502L1679 488C1675 462 1669 432 1671 402C1673 374 1684 350 1702 335C1714 325 1728 321 1742 321C1758 322 1774 331 1785 347C1796 364 1800 392 1798 426C1796 450 1790 464 1788 480L1812 502Z" fill="#1a2339"/>
<path d="M1684 378C1690 354 1710 334 1737 331C1758 330 1776 343 1786 370L1774 354C1764 343 1748 340 1736 341C1716 343 1698 356 1684 378Z" fill="#8c8e9c"/>
<path d="M1682 384C1690 362 1712 346 1737 345C1760 344 1778 357 1786 380C1792 400 1794 425 1790 448C1787 468 1776 488 1762 502H1700C1690 488 1680 468 1677 446C1674 424 1675 402 1682 384Z" fill="url(#skin)"/>
<ellipse cx="1748" cy="444" rx="20" ry="14" fill="#f0c8b8" opacity="0.500" filter="url(#b3)"/>
<ellipse cx="1734" cy="362" rx="26" ry="10" fill="#ecc2b0" opacity="0.500" filter="url(#b3)"/>
<path d="M1677 446C1680 468 1690 488 1700 502H1684L1679 488Z" fill="#1a2339"/>
<!-- brows -->
<path d="M1692 381C1700 374 1712 373 1722 378" stroke="#6a4a3e" stroke-width="3" fill="none" opacity="0.800"/>
<path d="M1748 380C1758 375 1770 376 1780 384" stroke="#6a4a3e" stroke-width="3" fill="none" opacity="0.800"/>
<!-- eyes -->
<ellipse cx="1705" cy="403" rx="13" ry="6" fill="#4a3238" opacity="0.800"/>
<ellipse cx="1767" cy="407" rx="14" ry="6" fill="#4a3238" opacity="0.800"/>
<!-- lens reflections -->
<path d="M1686 412C1696 408 1712 410 1720 414L1712 428L1692 426Z" fill="#f0e0f2" opacity="0.650"/>
<path d="M1744 416C1756 412 1776 414 1786 418L1776 432L1754 432Z" fill="#f0e0f2" opacity="0.650"/>
<!-- glasses -->
<g stroke="#23121a" stroke-width="3.800" fill="none" stroke-linejoin="round">
<path d="M1675 391L1721 398C1724 406 1723 417 1718 424C1712 432 1702 433 1694 431C1684 428 1677 419 1676 407Z"/>
<path d="M1741 401L1795 399C1795 409 1792 422 1785 430C1778 438 1765 439 1755 435C1745 431 1739 419 1741 401Z"/>
<path d="M1675 391L1721 398" stroke-width="5"/><path d="M1741 401L1795 399" stroke-width="5"/>
<path d="M1721 405C1727 401 1735 401 1741 406" stroke-width="4.500"/>
</g>
<!-- nose -->
<ellipse cx="1722" cy="432" rx="3" ry="2" fill="#4a2a28"/><ellipse cx="1737" cy="433" rx="3" ry="2" fill="#4a2a28"/>
<path d="M1716 430C1722 438 1738 438 1744 431" stroke="#b07a68" stroke-width="2" fill="none"/>
<!-- lips -->
<path d="M1708 459C1716 452 1724 451 1728 453C1733 451 1740 453 1748 460C1738 463 1718 463 1708 459Z" fill="#b0646c"/>
<path d="M1710 461C1720 464 1738 464 1746 462C1740 470 1716 470 1710 461Z" fill="#dc9898"/>
<path d="M1700 480C1715 500 1745 500 1762 482" stroke="#b88870" stroke-width="3" fill="none" opacity="0.500"/>
</g>
</g>
</svg>
<div class="abs" style="left:1546px;top:479px;width:65px;height:19px;background:rgba(20,20,20,0.550);border-radius:5px;"></div>
<span class="t" style="left:1549.20px;top:481.00px;font-size:13px;letter-spacing:-0.038px;">Sitta arifin</span>
<div class="abs" style="left:1527px;top:528px;width:1.2px;height:25.5px;background:#c4c4c4;"></div>
<div class="abs" style="left:1530px;top:528px;width:1.2px;height:25.5px;background:#c4c4c4;"></div>
<!-- PARTS -->
<div class="abs" style="left:1551px;top:758.7px;width:351.8px;height:198.3px;background:#222;border-radius:10px;"></div>
<div class="abs" style="left:1599.7px;top:769.3px;width:79.5px;height:79.7px;background:#000;border-radius:6px;"></div>
<svg style="left:0;top:0" width="1919" height="1079" viewBox="0 0 1919 1079" ><defs><clipPath id="dc"><rect x="1599.700" y="769.300" width="79.500" height="79.700" rx="6"/></clipPath></defs><g clip-path="url(#dc)"><circle cx="1639.600" cy="809.100" r="39.200" fill="none" stroke="#3a3ab2" stroke-width="1.900"/></g></svg>
<span class="t" style="left:1604.300px;top:780.89px;font-size:41px;color:#3c3cb6;letter-spacing:-1.200px;-webkit-text-stroke:0.700px #3c3cb6;transform:scaleX(0.9300);transform-origin:0 0;">datc</span>
<span class="t" style="left:1604.80px;top:819.00px;font-size:5.3px;letter-spacing:-0.078px;font-weight:700;color:#20204e;">Dwi Achmad Tax Consulting</span>
<div class="abs" style="left:1554px;top:837.3px;width:95.7px;height:18.2px;background:rgba(40,40,40,0.900);border-radius:4px;"></div><svg style="left:0;top:0" width="1919" height="1079" viewBox="0 0 1919 1079" ><g transform="translate(1557.3 840.0999999999999)"><rect x="3.600" y="0.500" width="4.800" height="8" rx="2.400" fill="#e8484a"/><path d="M1.500 6.200C1.500 9.200 3.500 10.800 6 10.800C8.500 10.800 10.500 9.200 10.500 6.200M6 10.800V13M3.800 13H8.200" fill="none" stroke="#e8484a" stroke-width="1.100" stroke-linecap="round"/><path d="M1 13L11 0.500" stroke="#222" stroke-width="2.600"/><path d="M1 13L11 0.500" stroke="#e8484a" stroke-width="1.200" stroke-linecap="round"/></g></svg><span class="t" style="left:1575.20px;top:841.00px;font-size:12.75px;letter-spacing:-0.271px;color:#f4f4f4;">DATC Admin</span>
<span class="t" style="left:1749.60px;top:800.00px;font-size:15.5px;letter-spacing:-0.138px;font-weight:700;color:#f4f4f4;">Zalfah Hasna Lu...</span>
<div class="abs" style="left:1729.4px;top:837.3px;width:139.8px;height:18.2px;background:rgba(44,44,44,0.900);border-radius:4px;"></div><svg style="left:0;top:0" width="1919" height="1079" viewBox="0 0 1919 1079" ><g transform="translate(1732.7 840.0999999999999)"><rect x="3.600" y="0.500" width="4.800" height="8" rx="2.400" fill="#e8484a"/><path d="M1.500 6.200C1.500 9.200 3.500 10.800 6 10.800C8.500 10.800 10.500 9.200 10.500 6.200M6 10.800V13M3.800 13H8.200" fill="none" stroke="#e8484a" stroke-width="1.100" stroke-linecap="round"/><path d="M1 13L11 0.500" stroke="#222" stroke-width="2.600"/><path d="M1 13L11 0.500" stroke="#e8484a" stroke-width="1.200" stroke-linecap="round"/></g></svg><span class="t" style="left:1750.70px;top:841.00px;font-size:12.75px;letter-spacing:-0.143px;color:#f4f4f4;">Zalfah Hasna Luth...</span>
<span class="t" style="left:1607.10px;top:899.00px;font-size:15.25px;letter-spacing:-0.396px;font-weight:700;color:#f4f4f4;">suci tiara</span>
<div class="abs" style="left:1554px;top:936px;width:76.8px;height:19px;background:rgba(44,44,44,0.900);border-radius:4px;"></div><svg style="left:0;top:0" width="1919" height="1079" viewBox="0 0 1919 1079" ><g transform="translate(1557.3 938.8)"><rect x="3.600" y="0.500" width="4.800" height="8" rx="2.400" fill="#e8484a"/><path d="M1.500 6.200C1.500 9.200 3.500 10.800 6 10.800C8.500 10.800 10.500 9.200 10.500 6.200M6 10.800V13M3.800 13H8.200" fill="none" stroke="#e8484a" stroke-width="1.100" stroke-linecap="round"/><path d="M1 13L11 0.500" stroke="#222" stroke-width="2.600"/><path d="M1 13L11 0.500" stroke="#e8484a" stroke-width="1.200" stroke-linecap="round"/></g></svg><span class="t" style="left:1575.20px;top:939.00px;font-size:13px;letter-spacing:-0.081px;color:#f4f4f4;">suci tiara</span>
<div class="abs" style="left:1775.5px;top:868.4px;width:79.7px;height:79px;background:#fff;border-radius:8px;"></div>
<div class="abs" style="left:1729.4px;top:936px;width:122.7px;height:19px;background:rgba(40,40,40,0.860);border-radius:4px;"></div><svg style="left:0;top:0" width="1919" height="1079" viewBox="0 0 1919 1079" ><g transform="translate(1732.7 938.8)"><rect x="3.600" y="0.500" width="4.800" height="8" rx="2.400" fill="#e8484a"/><path d="M1.500 6.200C1.500 9.200 3.500 10.800 6 10.800C8.500 10.800 10.500 9.200 10.500 6.200M6 10.800V13M3.800 13H8.200" fill="none" stroke="#e8484a" stroke-width="1.100" stroke-linecap="round"/><path d="M1 13L11 0.500" stroke="#222" stroke-width="2.600"/><path d="M1 13L11 0.500" stroke="#e8484a" stroke-width="1.200" stroke-linecap="round"/></g></svg><span class="t" style="left:1750.70px;top:939.00px;font-size:13px;letter-spacing:0.047px;color:#f4f4f4;">Karina apriliyanti</span>
<div class="abs" style="left:1892px;top:847px;width:22px;height:23px;background:rgba(70,70,70,0.350);border-radius:4px;"></div>
<svg style="left:0;top:0" width="1919" height="1079" viewBox="0 0 1919 1079" ><path d="M1898.500 849.500L1905.500 857.800L1898.500 866" fill="none" stroke="#fff" stroke-width="2.200" stroke-linecap="round" stroke-linejoin="round"/></svg>
<!-- LB -->
#c9c9c9
<!-- RED -->
#f2245e
<!-- W -->
#f2f2f2
<!-- ZOOMBOT -->
<div class="abs" style="left:25.9px;top:917px;width:32.2px;height:32.2px;background:#26272b;border-radius:50%;"></div>
<svg style="left:0;top:0" width="1919" height="1079" viewBox="0 0 1919 1079" ><g fill="none" stroke="#00e88c" stroke-width="1.300" stroke-linejoin="round" stroke-linecap="round"><path d="M45.300 925.100L49 928.800L39.400 938.300H35.200V935.200Z"/><path d="M43.100 927.800L46.600 930.600"/><path d="M35.200 940.600H49" stroke-width="1.500"/></g><path d="M80.6 997.3L84 993.6999999999999L87.4 997.3" fill="none" stroke="#f2f2f2" stroke-width="1.500" stroke-linecap="round" stroke-linejoin="round"/><path d="M178.5 997.3L181.9 993.6999999999999L185.3 997.3" fill="none" stroke="#f2f2f2" stroke-width="1.500" stroke-linecap="round" stroke-linejoin="round"/><path d="M645.4 997.3L648.8 993.6999999999999L652.1999999999999 997.3" fill="none" stroke="#f2f2f2" stroke-width="1.500" stroke-linecap="round" stroke-linejoin="round"/><path d="M735.4 997.3L738.8 993.6999999999999L742.1999999999999 997.3" fill="none" stroke="#f2f2f2" stroke-width="1.500" stroke-linecap="round" stroke-linejoin="round"/><path d="M815.4 997.3L818.8 993.6999999999999L822.1999999999999 997.3" fill="none" stroke="#f2f2f2" stroke-width="1.500" stroke-linecap="round" stroke-linejoin="round"/><path d="M913.4 997.3L916.8 993.6999999999999L920.1999999999999 997.3" fill="none" stroke="#f2f2f2" stroke-width="1.500" stroke-linecap="round" stroke-linejoin="round"/><path d="M1166.6 997.3L1170 993.6999999999999L1173.4 997.3" fill="none" stroke="#f2f2f2" stroke-width="1.500" stroke-linecap="round" stroke-linejoin="round"/><path d="M1393.3999999999999 997.3L1396.8 993.6999999999999L1400.2 997.3" fill="none" stroke="#f2f2f2" stroke-width="1.500" stroke-linecap="round" stroke-linejoin="round"/><g fill="none" stroke="#f2f2f2" stroke-width="1.500" stroke-linecap="round"><rect x="48.300" y="983.800" width="8" height="13.500" rx="4"/><path d="M45 994C45 998.500 48.200 1001 52.300 1001C56.400 1001 59.600 998.500 59.600 994M52.300 1001V1005.500M48.300 1005.700H56.300"/></g><path d="M41.300 1005.800L63.300 984.300" stroke="#484848" stroke-width="4.500"/><path d="M41.300 1005.800L63.300 984.300" stroke="#f2245e" stroke-width="2.400" stroke-linecap="round"/><g fill="none" stroke="#f2f2f2" stroke-width="1.500" stroke-linejoin="round"><rect x="133.300" y="988.800" width="16.200" height="13.200" rx="2.500"/><path d="M149.500 993.500L156.800 989.500V1001.500L149.500 997.500"/></g><path d="M133.800 1005.800L156.300 984.300" stroke="#484848" stroke-width="4.500"/><path d="M133.800 1005.800L156.300 984.300" stroke="#f2245e" stroke-width="2.400" stroke-linecap="round"/><g fill="none" stroke="#f2f2f2" stroke-width="1.500" stroke-linejoin="round"><circle cx="592" cy="990" r="2.800"/><path d="M587 1003.800V1001C587 998 589 996 592 996C593.800 996 595 996.600 596 997.500"/><path d="M587 1003.800H593"/><circle cx="599.800" cy="992.500" r="2.400"/><path d="M594.500 1003.800C594.500 1000 596.500 998 599.800 998C603.100 998 605.100 1000 605.100 1003.800Z"/></g><g fill="none" stroke="#f2f2f2" stroke-width="1.500" stroke-linejoin="round" stroke-linecap="round"><path d="M698.500 989.500H708a3.500 3.500 0 0 1 3.500 3.500V998a3.500 3.500 0 0 1-3.500 3.500H702.500L698.500 1005V1001.500H698a3.500 3.500 0 0 1-3.500-3.500V993a3.500 3.500 0 0 1 3.500-3.500Z"/><path d="M700 989.300V988a3.500 3.500 0 0 1 3.500-3.500H712.500a3.500 3.500 0 0 1 3.500 3.500V993a3.500 3.500 0 0 1-3.500 3.500H711.700"/></g><circle cx="699.800" cy="995.600" r="0.950" fill="#f2f2f2"/><circle cx="703" cy="995.600" r="0.950" fill="#f2f2f2"/><circle cx="706.200" cy="995.600" r="0.950" fill="#f2f2f2"/><path d="M790.900 1004.800C784 1000 779.500 995.500 779.500 990.800C779.500 987.500 782 985.200 785 985.200C787.500 985.200 789.700 986.500 790.900 988.800C792.100 986.500 794.300 985.200 796.800 985.200C799.800 985.200 802.300 987.500 802.300 990.800C802.300 995.500 797.800 1000 790.900 1004.800Z" fill="none" stroke="#f2f2f2" stroke-width="1.500" stroke-linejoin="round"/><rect x="867.500" y="985" width="24.500" height="20" rx="3.500" fill="#0fea87"/><path d="M879.750 1000.500V990.500M875.300 994.500L879.750 990L884.200 994.500" fill="none" stroke="#15301f" stroke-width="2.200" stroke-linecap="round" stroke-linejoin="round"/><path d="M968.800 985.500C971.500 987.300 974.500 988.200 977.800 988.300V994.500C977.800 999.500 973.800 1003 968.800 1004.800C963.800 1003 959.800 999.500 959.800 994.500V988.300C963.100 988.200 966.100 987.300 968.800 985.500Z" fill="none" stroke="#f2f2f2" stroke-width="1.500" stroke-linejoin="round"/><path d="M968.800 988.500V995H962.200V990.300C964.800 990 967 989.400 968.800 988.500ZM968.800 995H975.400C975.200 998.500 972.500 1000.800 968.800 1002.300Z" fill="#f2f2f2"/><defs><linearGradient id="aig" x1="0" y1="0" x2="1" y2="1"><stop offset="0" stop-color="#ffffff"/><stop offset="0.550" stop-color="#d8f0f8"/><stop offset="1" stop-color="#8fd0f0"/></linearGradient></defs><path d="M1053.500 984.800C1055.300 991.200 1058.200 994 1064.600 995.600C1058.200 997.200 1055.300 1000 1053.500 1006.400C1051.700 1000 1048.800 997.200 1042.400 995.600C1048.800 994 1051.700 991.200 1053.500 984.800Z" fill="url(#aig)" stroke="url(#aig)" stroke-width="1.200" stroke-linejoin="round"/><path d="M1063.200 983.200C1063.700 985.600 1064.500 986.400 1066.900 986.900C1064.500 987.400 1063.700 988.200 1063.200 990.600C1062.700 988.200 1061.900 987.400 1059.500 986.900C1061.900 986.400 1062.700 985.600 1063.200 983.200Z" fill="#d8f0f8"/><g fill="none" stroke="#f2f2f2" stroke-width="1.500" stroke-linecap="round"><path d="M1132 992.500V988.500a3.500 3.500 0 0 1 3.500-3.500H1139.500"/><circle cx="1148.300" cy="988.800" r="3.600"/><circle cx="1135.700" cy="1001.500" r="3.600"/><path d="M1151.800 997.500V1001.500a3.500 3.500 0 0 1-3.500 3.500H1144.300"/></g><rect x="1222.500" y="983.800" width="22" height="22.500" rx="5" fill="none" stroke="#f2f2f2" stroke-width="1.500"/><rect x="1248" y="983.800" width="22.300" height="22.500" rx="5" fill="none" stroke="#f2f2f2" stroke-width="1.500"/><rect x="1229.600" y="990.300" width="2.400" height="9.500" rx="1" fill="#f2f2f2"/><rect x="1235" y="990.300" width="2.400" height="9.500" rx="1" fill="#f2f2f2"/><rect x="1254.400" y="990.300" width="9.500" height="9.500" rx="2.500" fill="#f2f2f2"/><path d="M1356.500 1003.300H1351a3 3 0 0 1-3-3V988.500a3 3 0 0 1 3-3H1368a3 3 0 0 1 3 3V998" fill="none" stroke="#f2f2f2" stroke-width="1.500" stroke-linecap="round"/><rect x="1358.800" y="1000.300" width="13" height="4.600" rx="2.300" fill="#f2f2f2"/><circle cx="1450.800" cy="995" r="11.200" fill="none" stroke="#f2f2f2" stroke-width="1.500"/><circle cx="1445.500" cy="995" r="1.100" fill="#f2f2f2"/><circle cx="1450.800" cy="995" r="1.100" fill="#f2f2f2"/><circle cx="1456.100" cy="995" r="1.100" fill="#f2f2f2"/><path d="M1861 995.100L1866.700 985.200H1878.300L1884.200 995.100L1878.300 1005H1866.700Z" fill="none" stroke="#e81a5c" stroke-width="1.500" stroke-linejoin="round"/><path d="M1868.800 991.300L1876.300 998.800M1876.300 991.300L1868.800 998.800" stroke="#fff" stroke-width="2.600" stroke-linecap="round"/></svg>
<span class="t" style="left:36.80px;top:1012.00px;font-size:12.5px;letter-spacing:-0.317px;color:#c9c9c9;">Audio</span>
<span class="t" style="left:129.30px;top:1012.00px;font-size:12.25px;letter-spacing:-0.229px;color:#c9c9c9;">Video</span>
<span class="t" style="left:565.50px;top:1012.00px;font-size:12.25px;letter-spacing:-0.228px;color:#c9c9c9;">Participants</span>
<span class="t" style="left:694.30px;top:1012.00px;font-size:12px;letter-spacing:-0.550px;color:#c9c9c9;">Chat</span>
<span class="t" style="left:776.30px;top:1012.00px;font-size:12px;letter-spacing:-0.662px;color:#c9c9c9;">React</span>
<span class="t" style="left:865.00px;top:1012.00px;font-size:12px;letter-spacing:-0.502px;color:#c9c9c9;">Share</span>
<span class="t" style="left:942.00px;top:1012.00px;font-size:12.5px;letter-spacing:-0.199px;color:#c9c9c9;">Host tools</span>
<span class="t" style="left:1017.50px;top:1012.00px;font-size:12.5px;letter-spacing:-0.265px;color:#c9c9c9;">AI Companion</span>
<span class="t" style="left:1128.30px;top:1012.00px;font-size:12.25px;letter-spacing:-0.410px;color:#c9c9c9;">Apps</span>
<span class="t" style="left:1190.50px;top:1014.00px;font-size:12.25px;letter-spacing:-0.198px;color:#c9c9c9;">Pause/stop recording</span>
<span class="t" style="left:1326.30px;top:1012.00px;font-size:12.5px;letter-spacing:-0.269px;color:#c9c9c9;">Whiteboards</span>
<span class="t" style="left:1437.00px;top:1012.00px;font-size:12.5px;letter-spacing:-0.156px;color:#c9c9c9;">More</span>
<span class="t" style="left:1863.30px;top:1012.00px;font-size:12px;letter-spacing:-1.080px;color:#c9c9c9;">End</span>
<span class="t" style="left:611.33px;top:988.00px;font-size:12px;color:#bdbdbd;letter-spacing:-0.600px;">10</span>
<div class="abs" style="left:0px;top:1030.5px;width:1919px;height:1.5px;background:#1a1a1a;"></div>
<div class="abs" style="left:952.5px;top:1030.5px;width:966.5px;height:1.3px;background:#e6e6e6;"></div>
<!-- B -->
#62bfe0
<!-- TASK -->
<svg style="left:0;top:0" width="1919" height="1079" viewBox="0 0 1919 1079" ><defs><linearGradient id="cl" x1="0" y1="0" x2="0" y2="1"><stop offset="0" stop-color="#eaf2fb"/><stop offset="1" stop-color="#a8c4e8"/></linearGradient><linearGradient id="wn" x1="0" y1="0" x2="1" y2="1"><stop offset="0" stop-color="#7ad4ff"/><stop offset="1" stop-color="#1d8fe8"/></linearGradient><linearGradient id="fo" x1="0" y1="0" x2="0" y2="1"><stop offset="0" stop-color="#ffd24a"/><stop offset="1" stop-color="#f5b400"/></linearGradient><linearGradient id="ed" x1="0" y1="0" x2="1" y2="1"><stop offset="0" stop-color="#2fc2e8"/><stop offset="0.500" stop-color="#1d78d0"/><stop offset="1" stop-color="#0e4fa0"/></linearGradient><linearGradient id="ed2" x1="0" y1="1" x2="1" y2="0"><stop offset="0" stop-color="#2a9ee0"/><stop offset="1" stop-color="#5ee068"/></linearGradient><linearGradient id="cp" x1="0" y1="0" x2="1" y2="1"><stop offset="0" stop-color="#2fa0f0"/><stop offset="0.350" stop-color="#38c8a0"/><stop offset="0.550" stop-color="#f0d030"/><stop offset="0.750" stop-color="#f06048"/><stop offset="1" stop-color="#b050e8"/></linearGradient><linearGradient id="zm" x1="0" y1="0" x2="1" y2="1"><stop offset="0" stop-color="#3b82ff"/><stop offset="1" stop-color="#0b4fe8"/></linearGradient><linearGradient id="tv" x1="0" y1="0" x2="1" y2="1"><stop offset="0" stop-color="#ffffff"/><stop offset="1" stop-color="#bdbdbd"/></linearGradient></defs><path d="M21.500 1059.500C24 1066 33 1067.500 38 1062C32 1063.500 26 1062 24.500 1057.500Z" fill="#f0a020"/><path d="M22 1048.500a4 4 0 0 1 7-2a3.500 3.500 0 0 1 4.500 3.500a3 3 0 0 1-1 5.500H22.500a3.500 3.500 0 0 1-0.500-7Z" fill="url(#cl)"/><path d="M31.500 1057.500a3.800 3.800 0 0 1 6.800-1.800a3.200 3.200 0 0 1 4.200 3.200a2.800 2.800 0 0 1-1 5.300H31.500a3.300 3.300 0 0 1 0-6.700Z" fill="url(#cl)"/><circle cx="38" cy="1046.300" r="7.800" fill="#f58fa2"/><rect x="638.8" y="1045" width="11" height="11" rx="0.800" fill="url(#wn)"/><rect x="651" y="1045" width="11" height="11" rx="0.800" fill="url(#wn)"/><rect x="638.8" y="1057.2" width="11" height="11" rx="0.800" fill="url(#wn)"/><rect x="651" y="1057.2" width="11" height="11" rx="0.800" fill="url(#wn)"/><rect x="675.500" y="1040.500" width="219" height="31" rx="15.500" fill="#2e2e2e" stroke="#474747" stroke-width="1"/><circle cx="692.300" cy="1054.500" r="5.300" fill="none" stroke="#e6e6e6" stroke-width="1.600"/><path d="M696.200 1058.500L700.300 1062.600" stroke="#e6e6e6" stroke-width="1.800" stroke-linecap="round"/><ellipse cx="868" cy="1066.500" rx="20.500" ry="2.800" fill="#a8a828"/><ellipse cx="866" cy="1066.300" rx="10" ry="1.600" fill="#d8c040"/><g fill="#b9a6b0"><ellipse cx="873" cy="1055" rx="10" ry="6.500"/><ellipse cx="862.500" cy="1051" rx="5" ry="5"/><path d="M859 1049.500L848.500 1045L848 1046.500L858.500 1053.500Z"/><rect x="864" y="1058" width="3.500" height="8" rx="1.500"/><rect x="869.500" y="1059" width="3.500" height="7.500" rx="1.500" fill="#a4929c"/><rect x="876" y="1059" width="3.500" height="7.500" rx="1.500"/><rect x="880" y="1057" width="3.200" height="8.500" rx="1.500" fill="#a4929c" transform="rotate(-15 881 1060)"/><path d="M882 1053C885 1055 886.500 1058 887 1061" stroke="#9a8892" stroke-width="1.200" fill="none"/></g><ellipse cx="867.500" cy="1052.500" rx="4" ry="5" fill="#cdb9c0"/><circle cx="860.800" cy="1050" r="0.700" fill="#303050"/><rect x="907" y="1050.800" width="18" height="16" rx="1.500" fill="#6e6e6e"/><rect x="913" y="1044.500" width="18.300" height="16.500" rx="1.500" fill="url(#tv)"/><defs><linearGradient id="cpl" gradientUnits="userSpaceOnUse" x1="958" y1="1046" x2="960" y2="1066"><stop offset="0" stop-color="#2a8cf0"/><stop offset="0.400" stop-color="#30c0a0"/><stop offset="0.650" stop-color="#e8d830"/><stop offset="1" stop-color="#f07030"/></linearGradient><linearGradient id="cpr" gradientUnits="userSpaceOnUse" x1="966" y1="1046" x2="968" y2="1066"><stop offset="0" stop-color="#2a6ae8"/><stop offset="0.350" stop-color="#9a58f0"/><stop offset="0.700" stop-color="#f060b0"/><stop offset="1" stop-color="#f87840"/></linearGradient></defs><path d="M964.500 1048.300C969 1048.300 970.300 1050 971.200 1054.500C972.300 1060 971.300 1063.800 965.500 1063.800L961.500 1063.800" fill="none" stroke="url(#cpr)" stroke-width="5.200" stroke-linecap="round"/><path d="M962 1063.800C957.500 1063.800 956.200 1062 955.300 1057.500C954.200 1052 955.200 1048.300 961 1048.300L964.500 1048.300" fill="none" stroke="url(#cpl)" stroke-width="5.200" stroke-linecap="round"/><path d="M964.800 1051.500L961.600 1060.500" stroke="#1a1a2a" stroke-width="2.200" stroke-linecap="round"/><path d="M994.800 1047a1.500 1.500 0 0 1 1.500-1.500H1002.500L1005 1048H1017.500a1.500 1.500 0 0 1 1.500 1.500V1052H994.800Z" fill="#e8a400"/><rect x="994.800" y="1048.800" width="24.200" height="17.600" rx="1.500" fill="url(#fo)"/><path d="M999.400 1066.400V1062a2 2 0 0 1 2-2H1012.400a2 2 0 0 1 2 2V1066.400Z" fill="#1e80d8"/><rect x="1002.500" y="1062.300" width="8.800" height="1.800" rx="0.900" fill="#1668b8"/><circle cx="1051" cy="1056" r="12.100" fill="url(#ed)"/><path d="M1040.500 1050C1044 1043.500 1054 1041.500 1060 1047C1064 1051 1063.500 1056.500 1059.500 1058.500C1056 1060 1052 1058.500 1052.500 1055.500C1053 1052.500 1050 1050.500 1046.500 1051C1043.500 1051.500 1041 1054 1040 1057C1039.300 1054.500 1039.500 1052 1040.500 1050Z" fill="url(#ed2)"/><path d="M1046 1052C1043 1055 1043.500 1062 1049 1066C1053 1068.500 1058 1067 1061 1063.500C1056 1066 1050 1063 1049.500 1058C1049.300 1055 1050.500 1053 1052.500 1052.500C1050.500 1050.800 1047.500 1051 1046 1052Z" fill="#0d4a98" opacity="0.850"/><path d="M1088.800 1049.500V1048a3 3 0 0 1 3-3H1097.300a3 3 0 0 1 3 3V1049.500" fill="none" stroke="#38b0f0" stroke-width="1.800"/><path d="M1083 1049H1106.200V1064.500a3.800 3.800 0 0 1-3.800 3.800H1086.800a3.800 3.800 0 0 1-3.800-3.800Z" fill="#f4f4f4"/><rect x="1090" y="1053.800" width="4" height="4" fill="#f25022"/><rect x="1095" y="1053.800" width="4" height="4" fill="#7fba00"/><rect x="1090" y="1058.800" width="4" height="4" fill="#00a4ef"/><rect x="1095" y="1058.800" width="4" height="4" fill="#ffb900"/><circle cx="1138.800" cy="1055.800" r="11.200" fill="#1ed760"/><g fill="none" stroke="#101010" stroke-linecap="round"><path d="M1132.300 1052.300C1137 1050.800 1142 1051.300 1146 1053.500" stroke-width="2"/><path d="M1133 1056.300C1137 1055.200 1141 1055.600 1144.500 1057.500" stroke-width="1.700"/><path d="M1133.800 1060C1137 1059.200 1140 1059.500 1143 1061" stroke-width="1.400"/></g><rect x="1136" y="1072.300" width="6" height="2.500" rx="1.250" fill="#8c8c8c"/><path d="M1172.500 1051.500L1191.500 1047L1192.300 1050.500L1173.300 1055Z" fill="#e8e8e8"/><path d="M1174.500 1051L1177 1053.800M1179 1050L1181.500 1052.800M1183.500 1049L1186 1051.800M1188 1048L1190.300 1050.700" stroke="#222" stroke-width="1.600"/><rect x="1173.500" y="1054.500" width="19.500" height="11.300" fill="#f0f0f0"/><rect x="1187" y="1040.500" width="3.600" height="12" rx="0.800" fill="#dfe8ff"/><rect x="1193.600" y="1040.500" width="3.600" height="12" rx="0.800" fill="#dfe8ff"/><rect x="1171" y="1072.300" width="14.600" height="2.600" rx="1.300" fill="#f5d800"/><rect x="1185.600" y="1073.200" width="9.200" height="0.900" fill="#8c8c8c"/><rect x="1221" y="1045" width="17.800" height="21" rx="1.500" fill="#41a5ee"/><rect x="1221" y="1050.300" width="17.800" height="5.300" fill="#2b7cd3"/><rect x="1221" y="1055.600" width="17.800" height="5.300" fill="#185abd"/><path d="M1221 1060.900H1238.800V1064.500a1.500 1.500 0 0 1-1.500 1.500H1222.500a1.500 1.500 0 0 1-1.500-1.500Z" fill="#103f91"/><rect x="1214.800" y="1050" width="12.500" height="12" rx="1" fill="#185abd"/><rect x="1224" y="1072.300" width="6" height="2.500" rx="1.250" fill="#8c8c8c"/><rect x="1251" y="1036" width="40" height="39.800" rx="5" fill="#7e4552"/><rect x="1258.500" y="1044" width="24.500" height="24.300" rx="10.500" fill="url(#zm)"/><rect x="1254.800" y="1072" width="32.200" height="3" rx="1.500" fill="#f598a8"/><path d="M1697.500 1058.600L1702.500 1053.400L1707.500 1058.600" fill="none" stroke="#f0f0f0" stroke-width="1.500" stroke-linecap="round" stroke-linejoin="round"/><g fill="none" stroke="#62bfe0" stroke-width="1.200" stroke-linecap="round"><rect x="1727.300" y="1048.900" width="3.400" height="6.600" rx="1.700"/><path d="M1725.300 1054C1725.300 1056.500 1727 1057.800 1729 1057.800C1731 1057.800 1732.700 1056.500 1732.700 1054M1729 1057.800V1060"/><path d="M1744.500 1053.800L1735.500 1057.300L1739.500 1058.800L1741 1062.800Z" stroke-linejoin="round"/></g><g fill="none" stroke="#f0f0f0" stroke-width="1.300" stroke-linecap="round"><path d="M1759 1054.300C1763 1049.800 1770 1049.800 1774 1054.300"/><path d="M1761.500 1056.800C1764.200 1053.800 1768.800 1053.800 1771.500 1056.800"/><path d="M1764 1059.200C1765.300 1057.700 1767.700 1057.700 1769 1059.200"/></g><circle cx="1766.500" cy="1061" r="1" fill="#f0f0f0"/><path d="M1783 1054.500H1785.500L1789 1051.500V1061.500L1785.500 1058.500H1783Z" fill="none" stroke="#f0f0f0" stroke-width="1.200" stroke-linejoin="round"/><path d="M1791.300 1054.300C1792.300 1055.500 1792.300 1057.500 1791.300 1058.700M1793.500 1052.500C1795.500 1054.800 1795.500 1058.200 1793.500 1060.500" fill="none" stroke="#f0f0f0" stroke-width="1.100" stroke-linecap="round"/><path d="M1796 1051C1798.500 1054 1798.500 1059 1796 1062" fill="none" stroke="#6a6a6a" stroke-width="1" stroke-linecap="round"/><rect x="1806.800" y="1052.300" width="13.500" height="8.600" rx="2" fill="none" stroke="#f0f0f0" stroke-width="1.200"/><rect x="1808.600" y="1054.100" width="4" height="5" rx="0.800" fill="#f0f0f0"/><path d="M1821.600 1055V1058.200" stroke="#f0f0f0" stroke-width="1.600" stroke-linecap="round"/></svg>
<span class="t" style="left:32.31px;top:1041.00px;font-size:10.5px;color:#2a1016;letter-spacing:-0.400px;">9+</span>
<span class="t" style="left:50.80px;top:1042.00px;font-size:11.75px;letter-spacing:-0.687px;color:#f4f4f4;">22°C</span>
<span class="t" style="left:50.80px;top:1058.00px;font-size:11.75px;letter-spacing:-0.364px;color:#d2d2d2;">Berawan</span>
<span class="t" style="left:712.00px;top:1049.00px;font-size:14px;letter-spacing:-0.769px;color:#dadada;">Search</span>
<span class="t" style="left:1174.200px;top:1055.300px;font-size:10.500px;font-weight:700;letter-spacing:-0.300px"><span style="color:#d86018">3</span><span style="color:#2a70c8">2</span><span style="color:#3a9a28">1</span></span>
<span class="t" style="left:1216.60px;top:1052.00px;font-size:10.25px;letter-spacing:-0.686px;font-weight:700;">W</span>
<span class="t" style="left:1263.01px;top:1051.00px;font-size:11.5px;font-weight:700;letter-spacing:-0.500px;">zm</span>
<span class="t" style="left:1873.30px;top:1043.00px;font-size:11.75px;letter-spacing:-0.351px;color:#f4f4f4;">19.21</span>
<span class="t" style="left:1840.50px;top:1058.00px;font-size:12px;letter-spacing:0.082px;color:#f4f4f4;">12/08/2025</span>
</body>
</html>
